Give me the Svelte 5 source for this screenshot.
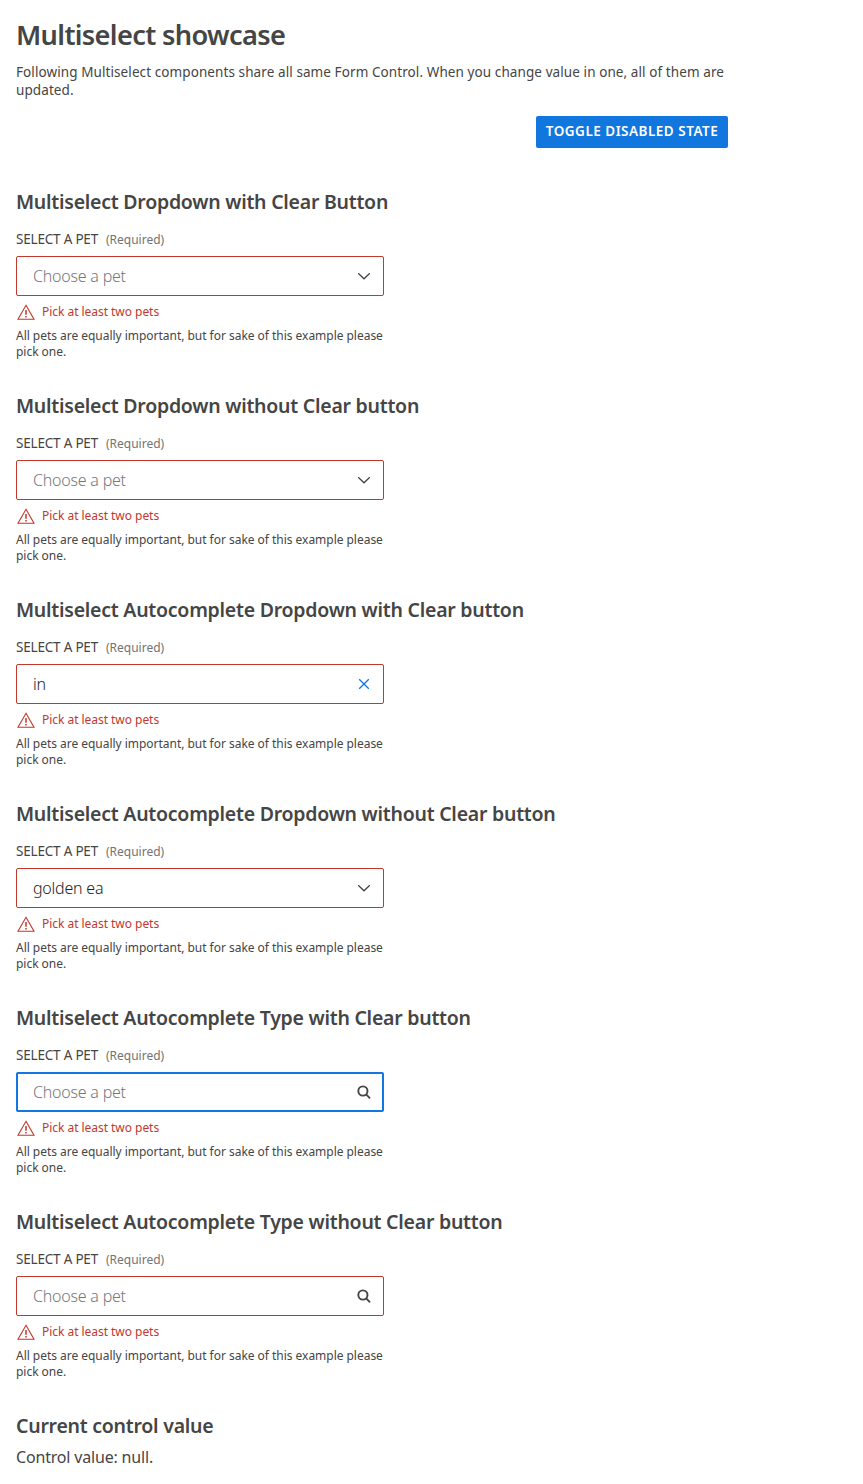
<script>
  const fields = [
    { title: 'Multiselect Dropdown with Clear Button', value: '', icon: 'chevron' },
    { title: 'Multiselect Dropdown without Clear button', value: '', icon: 'chevron' },
    { title: 'Multiselect Autocomplete Dropdown with Clear button', value: 'in', icon: 'clear' },
    { title: 'Multiselect Autocomplete Dropdown without Clear button', value: 'golden ea', icon: 'chevron' },
    { title: 'Multiselect Autocomplete Type with Clear button', value: '', icon: 'search', focused: true },
    { title: 'Multiselect Autocomplete Type without Clear button', value: '', icon: 'search' }
  ];
</script>

<main>
  <h1>Multiselect showcase</h1>
  <p class="intro">Following Multiselect components share all same Form Control. When you change value in one, all of them are updated.</p>
  <div class="actions"><button class="toggle">Toggle disabled state</button></div>
  {#each fields as field}
    <section>
      <h2>{field.title}</h2>
      <div class="label"><span class="name">Select a pet</span><span class="required">(Required)</span></div>
      <div class="control" class:focused={field.focused}>
        <span class="value" class:placeholder={!field.value}>{field.value || 'Choose a pet'}</span>
        <svg class={field.icon} width="16" height="16" viewBox="0 0 16 16">
          {#if field.icon === 'chevron'}<path d="M2.2 5.2 8 10.8l5.800-5.600" />
          {:else if field.icon === 'clear'}<path d="m3.200 3.200 9.600 9.600m0-9.600-9.600 9.600" />
          {:else}<circle cx="6.900" cy="7" r="4.600" /><path d="m10.200 10.300 3.800 4" />{/if}
        </svg>
      </div>
      <div class="error">
        <svg width="20" height="16" viewBox="0 0 20 16"><path d="M10 1.300 18 15.300H2z" /><path class="mark" d="M10 6v4.800m0 1.200v1.600" /></svg>
        <span>Pick at least two pets</span>
      </div>
      <p class="hint">All pets are equally important, but for sake of this example please pick one.</p>
    </section>
  {/each}
  <h2>Current control value</h2>
  <p class="current">Control value: null.</p>
</main>

<style>
  :global(body) { background: #fff; }
  main { width: 712px; padding: 15px 16px 16px; color: #454545; font-family: "Noto Sans", sans-serif; }
  h1, h2, p { margin: 0; }
  h1 { font-size: 27.200px; line-height: 40px; font-weight: 570; letter-spacing: -0.640px; white-space: nowrap; }
  .intro { margin-top: 8px; font-size: 13.500px; line-height: 18px; letter-spacing: 0.090px; }
  .actions { display: flex; justify-content: flex-end; margin-top: 17px; margin-bottom: 42px; }
  .toggle { height: 32px; width: 192px; padding: 0 0 2px; border: 0; border-radius: 2px; background: #1176dd; color: #fff; font: 600 13.500px/30px "Noto Sans", sans-serif; letter-spacing: 0.490px; text-transform: uppercase; white-space: nowrap; }
  section { height: 204px; }
  h2 { font-size: 19.500px; line-height: 24px; font-weight: 570; letter-spacing: -0.245px; white-space: nowrap; }
  .label { display: flex; align-items: baseline; gap: 8px; height: 18px; line-height: 18px; margin-top: 16px; }
  .name { font-size: 13.500px; letter-spacing: -0.200px; text-transform: uppercase; }
  .required { font-size: 12px; color: #737373; }
  .control { display: flex; align-items: center; justify-content: space-between; box-sizing: border-box; width: 368px; height: 40px; margin-top: 8px; padding: 0 11px 0 16px; border: 1px solid #c0392b; border-radius: 2px; }
  .control.focused { border: 2px solid #1176dd; padding: 0 10px 0 15px; }
  .value { font-size: 16px; font-weight: 300; letter-spacing: -0.220px; color: #222; }
  .placeholder { color: #777; }
  svg { fill: none; stroke: #454545; stroke-width: 1.300; }
  .clear { stroke: #1176dd; }
  .search { stroke-width: 1.900; }
  .error { display: flex; gap: 6px; margin-top: 8px; height: 16px; font-size: 12px; line-height: 16px; letter-spacing: -0.040px; color: #c0392b; }
  .error svg { stroke: #c0392b; stroke-width: 1.100; }
  .error .mark { stroke-width: 1.500; }
  .hint { width: 372px; margin-top: 8px; font-size: 12px; line-height: 16px; letter-spacing: -0.030px; }
  .current { margin-top: 8px; font-size: 16px; line-height: 22px; letter-spacing: -0.180px; }
</style>
